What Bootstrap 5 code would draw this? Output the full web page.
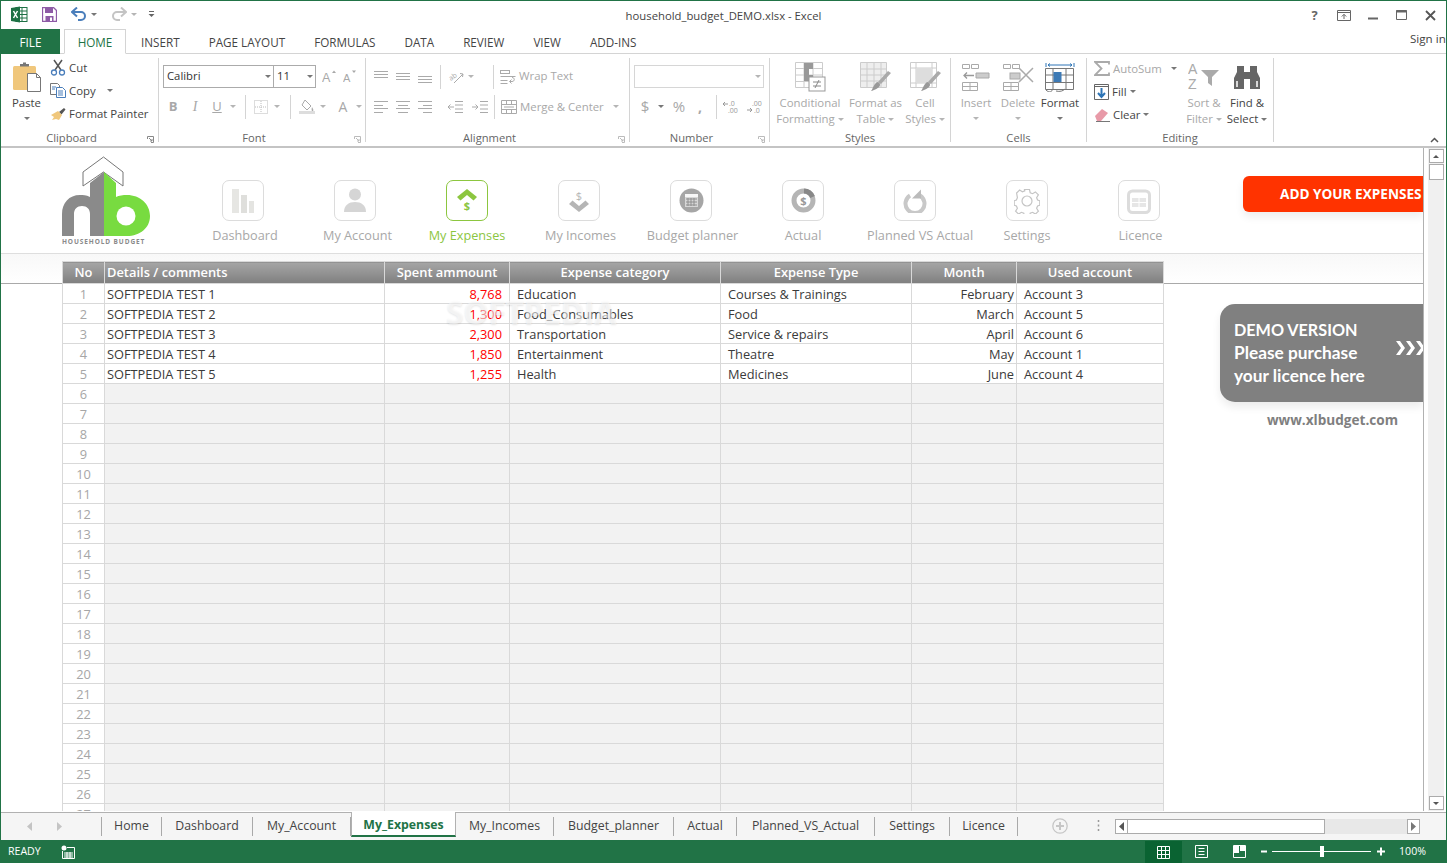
<!DOCTYPE html>
<html lang="en">
<head>
<meta charset="utf-8">
<title>household_budget_DEMO.xlsx - Excel</title>
<link href="https://cdn.jsdelivr.net/npm/bootstrap@5.3.0/dist/css/bootstrap.min.css" rel="stylesheet">
<style>
html,body{height:100%;overflow:hidden}
body{font-family:"Open Sans","Noto Sans",sans-serif;font-size:11.5px;color:#444;background:#fff;width:1447px;height:863px}
svg{display:block}
.xl-win{width:1447px;height:863px;border:solid #217346;border-width:1px 1px 0 1px}
.xl-title{height:28px}
.qat-ic{margin-top:-2px;margin-left:10px}
.xl-name{position:absolute;left:0;right:0;text-align:center;top:7px;font-size:11.3px;color:#444;line-height:16px}
.xl-titlewrap{position:relative}
.win-btn{width:29px;display:flex;justify-content:center}
.tri{display:inline-block;width:0;height:0;border-style:solid;border-width:3px 3px 0 3px;border-color:#777 transparent transparent}
.tri-off{border-top-color:#b5b5b5}
.tri-up{transform:rotate(180deg);border-top-color:#555}
.tri-dn{border-top-color:#555}
.gap-save{margin-left:14px}.gap-undo{margin-left:14px}.gap-redo{margin-left:14px}.gap-custom{margin-left:11px}
.qm{font-weight:700;font-size:13px;color:#666;line-height:14px}
.win-end{margin-right:1px}
.xl-tabs{height:25px;border-bottom:1px solid #d4d4d4;flex-wrap:nowrap}
.xl-tabs .nav-link{color:#444;padding:0;height:25px;line-height:26px;font-size:11.7px;text-align:center}
.xl-tabs .nav-item{margin-left:29px}
.xl-tabs .nav-item.ti-file{margin-left:0}
.xl-tabs .nav-item.ti-home{margin-left:4px}
.xl-tabs .nav-item.ti-ins{margin-left:15px}
.t-file{width:59px;background:#217346;color:#fff!important}
.t-home{width:62px;border:1px solid #d4d4d4;border-bottom:1px solid #fff;color:#217346!important;height:25px;background:#fff;line-height:24px!important}
.signin{margin-left:auto;font-size:11.6px;line-height:22px;margin-top:-1px;white-space:nowrap;width:36px;overflow:hidden}
.xl-ribbon{height:94px;border-bottom:2px solid #c4c4c4;padding-top:4px;position:relative}
.rg{height:84px;border-right:1px solid #d4d4d4;flex:none;display:flex;flex-direction:column}
.rg-body{height:73px;display:flex}
.rg-label{height:11px;line-height:14px;font-size:11.2px;color:#666;text-align:center;position:relative;white-space:nowrap}
.lab-l{padding-right:16px}
.launch{position:absolute;right:4px;top:5px}
.rw-clip{width:158px}.rw-font{width:207px}.rw-align{width:264px}.rw-num{width:140px}.rw-style{width:181px}.rw-cells{width:136px}.rw-edit{width:187px}
.stack3{display:flex;flex-direction:column;margin-top:-2px}
.stack-edit{padding-left:7px;width:97px;margin-top:-1px}
.srow{height:23px;display:flex;align-items:center;white-space:nowrap;font-size:11.4px;color:#444}
.srow svg{margin-right:3px}
.off{color:#a8a8a8!important}
.bigbtn{display:flex;flex-direction:column;align-items:center;text-align:center;flex:none;line-height:16px;font-size:11.4px;color:#444;padding-top:4px;white-space:nowrap}
.bigbtn>svg{height:30px;margin-bottom:3px}
.bigbtn .tri{vertical-align:2px}
.tri-low{margin-top:6px}
.dblock{display:block;height:16px}
.bigbtn.b-paste{width:49px;padding-left:2px}
.b-cond{width:80px;margin-left:0}.b-tab{width:53px;margin-left:-1px}.b-cell{width:44px;margin-left:1px}.b-c{width:42px}.b-sort{width:42px;margin-left:-1px}.b-find{width:44px}
.two-rows{display:flex;flex-direction:column;padding-top:7px;gap:7px;width:100%}
.r23{height:23px;display:flex;align-items:center;white-space:nowrap}
.pl4{padding-left:4px}.pl3{padding-left:3px}
.cell22{width:22px;height:22px;display:flex;align-items:center;justify-content:center;flex:none}
.cell10{width:10px;display:flex;justify-content:center;flex:none}
.cell16{width:16px}
.vsep{width:1px;height:24px;background:#d4d4d4;flex:none}
.fx13{font-size:13px}.fx14{font-size:14px}.fx15{font-size:15px}
.comma{margin-left:2px;font-weight:700;font-size:14px;line-height:10px}
.sz-ml5{margin-left:5px}.sz-ml6{margin-left:6px}
.combo{height:23px;border:1px solid #ababab;background:#fff;display:flex;align-items:center;font-size:11.3px;color:#333;padding:0 2px 0 3px;justify-content:space-between;flex:none}
.c-font{width:111px}.c-size{width:43px;margin-left:-1px}.c-num{width:130px;border-color:#d6d6d6}
.glyph{font-family:"Liberation Serif",serif}
.sp-a{margin:0 4px 0 7px}.sp-b{margin:0 5px 0 8px}.sp-c{margin:0 5px 0 4px}.sp-d{margin:0 0 0 17px}.sp-e{margin:0 0 0 3px}.sp-f{margin-left:8px}
.wr-ic{margin:0 3px 0 6px}
.txt-r{font-size:11.4px}
.txt-up{margin-top:-2px}
.ind-a{margin-left:8px}.ind-b{margin-left:3px}
.nudge-l{margin-left:-2px}
.tri-m{margin-left:9px}.tri-s{margin-left:3px}.tri-c{margin-left:11px}
.pct{margin-left:2px}
.cells-body{padding-left:4px}
.collapse-up{position:absolute;right:7px;bottom:3px}
.xl-sheet{height:664px;overflow:hidden}
.canvas{width:1423px;flex:none;overflow:hidden;position:relative;height:663px;border-right:1px solid #b1b1b1}
.dash-head{height:106px;border-bottom:1px solid #dedede;flex:none}
.logo-b{margin:7px 0 0 61px;flex:none}
.navstrip{margin-left:35px;padding-top:32px}
.nav-it{width:112px;text-align:center;color:#a8a8a8;font-size:12.7px;padding:0;text-decoration:none}
.nav-it:hover{color:#a8a8a8}
.nav-box{width:42px;height:41px;border:1px solid #dcdcdc;border-radius:7px;margin:0 auto 5px;display:flex;align-items:center;justify-content:center;background:#fff}
.nav-lab{line-height:18px;display:block;white-space:nowrap}
.lab-r1{padding-left:5px}.lab-r2{padding-left:8px}.lab-r3{padding-left:3px}.lab-r4{padding-left:4px}
.nav-on,.nav-on:hover{color:#8cc63f}
.nav-on .nav-box{border-color:#8cc63f}
.btn-add{margin-top:28px;margin-left:auto;width:180px;height:36px;background:#ff3300;border:0;color:#fff;font-weight:700;font-size:13.6px;border-radius:6px 0 0 6px;padding:0 0 0 37px;text-align:left;white-space:nowrap;overflow:hidden;box-shadow:0 5px 9px rgba(0,0,0,.07);line-height:36px;flex:none}
.btn-add:hover{background:#ff3300;color:#fff}
.sheet-body{padding-top:7px;background:linear-gradient(#f8f8f8,#fff 30px);background-repeat:no-repeat;background-size:100% 30px}
.gutter{width:61px;flex:none;margin-top:22px;border-top:1px solid #a9a9a9}
.x-table{table-layout:fixed;width:1101px;flex:none;border-collapse:collapse;margin:0;--bs-table-bg:transparent;--bs-table-border-color:#d9d9d9;color:#3a3a3a;font-size:12.8px}
.x-table>:not(caption)>*>*{padding:2px 7px 0;height:20px;line-height:17px;border:1px solid #d9d9d9;white-space:nowrap;overflow:hidden;box-shadow:none;vertical-align:middle}
.x-table thead th{height:22px;background:linear-gradient(#a6a6a6,#7f7f7f);color:#fff;text-align:center;font-weight:600;font-size:12.9px;line-height:21px;border-color:#d9d9d9;padding:0 2px}
.x-table thead th.th-left{text-align:left}
.x-table td.n{text-align:center;color:#a6a6a6;padding:2px 0 0}
.x-table td.d{padding-left:2px}
.x-table td.amt{text-align:right;color:#f00}
.x-table td.r{text-align:right;padding-right:2px}
.x-table tr.em td{background:#f2f2f2}
.x-table tr.em td.n{background:#fff}
.c1{width:42px}.c2{width:280px}.c3{width:125px}.c4{width:211px}.c5{width:191px}.c6{width:105px}.c7{width:147px}
.side{flex:1 1 auto;margin-top:22px;border-top:1px solid #a9a9a9;padding:20px 0 0 56px;min-width:0;overflow:hidden}
.demo{height:98px;background:#808080;border-radius:15px 0 0 15px;color:#fff;font-weight:700;font-size:17.3px;line-height:23px;padding:14px 0 0 14px;box-shadow:0 5px 9px rgba(0,0,0,.08);font-family:"Lato","Open Sans",sans-serif;position:relative;white-space:nowrap;overflow:hidden}
.demo-h{font-size:16.2px}
.chev{position:absolute;left:175px;top:36px}
.web{text-align:center;font-weight:700;color:#7f7f7f;font-size:13.6px;margin:9px 0 0 22px;line-height:18px;font-family:"Open Sans",sans-serif;white-space:nowrap}
.wmark{position:absolute;left:445px;top:148px;font-size:32px;font-weight:700;color:rgba(255,255,255,.55);text-shadow:0 1px 2px rgba(0,0,0,.1);pointer-events:none;line-height:32px;letter-spacing:-.4px}
.vscroll{flex:1;background:#f0f0f0;margin:0 2px 0 4px;display:flex;flex-direction:column;align-items:center;height:663px;padding-top:1px}
.sb-btn{width:15px;height:14px;border:1px solid #ababab;background:#fff;display:flex;align-items:center;justify-content:center;flex:none}
.sb-thumb{width:15px;height:16px;border:1px solid #ababab;background:#fff;margin-top:1px;flex:none}
.sb-last{margin-bottom:1px}
.xl-bot{height:28px;border-top:1px solid #b1b1b1;background:#f5f5f5;position:relative}
.sheet-nav{width:100px;padding-left:26px;gap:24px;flex:none}
.stabs{flex:none;flex-wrap:nowrap;height:27px}
.stabs .nav-link{padding:0;height:19px;margin-top:4px;line-height:17px;border-right:1px solid #a9a9a9;color:#444;font-size:12.3px;text-align:center;white-space:nowrap}
.stabs .st-first .nav-link{border-left:1px solid #a9a9a9}
.stabs .st-on .nav-link{height:25px;margin-top:-1px;background:#fff;color:#217346;font-weight:700;border:1px solid #b1b1b1;border-top:0;border-bottom:2px solid #217346;line-height:25px}
.st-a{width:61px}.st-b{width:91px}.st-c{width:98px}.st-d{width:105px}.st-e{width:98px}.st-f{width:120px}.st-g{width:63px}.st-h{width:138px}.st-i{width:75px}.st-j{width:68px}
.plus-w{margin-left:34px;margin-top:5px}
.dots{margin-left:29px;margin-top:6px}
.hscroll{margin-left:15px;margin-top:6px;width:305px;height:15px;background:#e8e8e8;display:flex;flex:none}
.hb{width:13px;height:15px;border:1px solid #ababab;background:#fff;display:flex;align-items:center;justify-content:center;flex:none}
.hthumb{width:197px;height:15px;border:1px solid #ababab;border-left:0;background:#fff;flex:none}
.xl-status{height:23px;background:#217346;color:#fff;font-size:10.6px;margin:0 -1px;padding-left:8px}
.st-macro{margin-left:20px}
.st-norm{width:37px;height:22px;background:#0a6332;margin-top:1px;display:flex;align-items:center;justify-content:center}
.st-view{width:38px;display:flex;justify-content:center}
.st-zoom{margin-left:3px}
.st-pct{margin:0 21px 0 12px}
</style>
</head>
<body>
<div class="xl-win d-flex flex-column">

  <div class="xl-title d-flex align-items-center xl-titlewrap">
    <div class="xl-name">household_budget_DEMO.xlsx - Excel</div>
    <div class="d-flex align-items-center qat-ic">
      <svg width="17" height="17" viewBox="0 0 17 17"><rect x="5" y="1.500" width="11" height="14" fill="#fff" stroke="#1e7145"/><path d="M11 2v13M6 5h10M6 8.500h10M6 12h10" stroke="#1e7145"/><path d="M0 2l9-1.500v16L0 15z" fill="#1e7145"/><path d="M2.500 5l4 7M6.500 5l-4 7" stroke="#fff" stroke-width="1.500"/></svg>
      <svg class="gap-save" width="15" height="15" viewBox="0 0 15 15"><path d="M.5.500h11l3 3v11H.5z" fill="#fff" stroke="#8e5ba6" stroke-width="1.300"/><rect x="3" y="1" width="8" height="5" fill="#8e5ba6"/><rect x="3.500" y="9" width="8" height="5.500" fill="#8e5ba6"/><rect x="8" y="10.500" width="2" height="3.500" fill="#fff"/></svg>
      <svg class="gap-undo" width="16" height="14" viewBox="0 0 16 14"><path d="M2 5h8a4 4 0 0 1 0 8H7" fill="none" stroke="#4a7ebb" stroke-width="2"/><path d="M6 .5L1 5l5 4.500" fill="none" stroke="#4a7ebb" stroke-width="2"/></svg>
      <span class="tri ms-1"></span>
      <svg class="gap-redo" width="16" height="14" viewBox="0 0 16 14"><path d="M14 5H6a4 4 0 0 0 0 8h3" fill="none" stroke="#c4c4c4" stroke-width="2"/><path d="M10 .5L15 5l-5 4.500" fill="none" stroke="#c4c4c4" stroke-width="2"/></svg>
      <span class="tri tri-off ms-1"></span>
      <svg class="gap-custom" width="7" height="8" viewBox="0 0 7 8"><path d="M1 1.500h5" stroke="#666"/><path d="M.5 4h6L3.500 7z" fill="#666"/></svg>
    </div>
    <div class="d-flex align-items-center ms-auto win-end">
      <div class="win-btn"><span class="qm">?</span></div>
      <div class="win-btn"><svg width="14" height="11" viewBox="0 0 14 11"><path d="M.5.500h13v10H.5zM.5 2.500h13" fill="none" stroke="#666"/><path d="M7 9V4.500M4.800 6.500L7 4.300l2.200 2.200" fill="none" stroke="#666"/></svg></div>
      <div class="win-btn"><svg width="10" height="10" viewBox="0 0 10 10"><path d="M0 8.500h10" stroke="#666" stroke-width="2"/></svg></div>
      <div class="win-btn"><svg width="11" height="10" viewBox="0 0 11 10"><path d="M.5.500h10v9H.5z" fill="none" stroke="#666"/><path d="M0 1.500h11" stroke="#666" stroke-width="2"/></svg></div>
      <div class="win-btn"><svg width="11" height="11" viewBox="0 0 11 11"><path d="M1 1l9 9M10 1l-9 9" stroke="#555" stroke-width="1.800"/></svg></div>
    </div>
  </div>

  <ul class="nav xl-tabs">
    <li class="nav-item ti-file"><a class="nav-link t-file" href="#">FILE</a></li>
    <li class="nav-item ti-home"><a class="nav-link t-home" href="#">HOME</a></li>
    <li class="nav-item ti-ins"><a class="nav-link" href="#">INSERT</a></li>
    <li class="nav-item"><a class="nav-link" href="#">PAGE LAYOUT</a></li>
    <li class="nav-item"><a class="nav-link" href="#">FORMULAS</a></li>
    <li class="nav-item"><a class="nav-link" href="#">DATA</a></li>
    <li class="nav-item"><a class="nav-link" href="#">REVIEW</a></li>
    <li class="nav-item"><a class="nav-link" href="#">VIEW</a></li>
    <li class="nav-item"><a class="nav-link" href="#">ADD-INS</a></li>
    <li class="signin">Sign in</li>
  </ul>

  <div class="xl-ribbon d-flex">
    <!-- Clipboard -->
    <section class="rg rw-clip">
      <div class="rg-body">
        <div class="bigbtn b-paste">
          <svg width="30" height="30" viewBox="0 0 30 30"><rect x="1" y="4" width="23" height="24" rx="1.500" fill="#f0c77c"/><path d="M8 4.500h9V2h-3V.5h-3V2H8z" fill="#777"/><path d="M15.500 11.500h9l4 4v14h-13z" fill="#fff" stroke="#777"/><path d="M24.500 11.500v4h4" fill="none" stroke="#777"/></svg>
          <span class="dblock">Paste</span>
          <span class="tri tri-low"></span>
        </div>
        <div class="stack3">
          <div class="srow"><svg width="16" height="17" viewBox="0 0 16 17"><path d="M4 1l7 10M12 1L5 11" stroke="#555" stroke-width="1.500"/><circle cx="4" cy="13.500" r="2.500" fill="none" stroke="#4a7ebb" stroke-width="1.300"/><circle cx="12" cy="13.500" r="2.500" fill="none" stroke="#4a7ebb" stroke-width="1.300"/></svg>Cut</div>
          <div class="srow"><svg width="16" height="15" viewBox="0 0 16 15"><path d="M.5.500h7l2 2v9h-9z" fill="#fff" stroke="#777"/><path d="M6.500 4.500h6l3 3v7h-9z" fill="#fff" stroke="#4a7ebb"/><path d="M8 8h5M8 10h5M8 12h5M2 4h4M2 6h3" stroke="#4a7ebb"/></svg>Copy<span class="tri tri-c"></span></div>
          <div class="srow"><svg width="16" height="14" viewBox="0 0 16 14"><path d="M9 5l5-4 1.500 1.500-4 5z" fill="#555"/><path d="M1 8l7-4 4 4-3 5-3-1-4 1 2-3z" fill="#f0c77c"/></svg>Format Painter</div>
        </div>
      </div>
      <div class="rg-label lab-l">Clipboard<svg class="launch" width="7" height="7" viewBox="0 0 7 7"><path d="M.5 3V.5h6v6H4M2 2l3 3M5 3v2H3" fill="none" stroke="#888"/></svg></div>
    </section>
    <!-- Font -->
    <section class="rg rw-font">
      <div class="rg-body">
        <div class="two-rows">
          <div class="r23 pl4">
            <div class="combo c-font"><span>Calibri</span><span class="tri"></span></div>
            <div class="combo c-size"><span>11</span><span class="tri"></span></div>
            <svg class="sz-ml6" width="16" height="17" viewBox="0 0 16 17"><text x="0" y="14" font-size="12.500" font-family="Liberation Sans" fill="#a8a8a8">A</text><path d="M10 5l2-2.500L14 5z" fill="#a8a8a8"/></svg>
            <svg class="sz-ml5" width="14" height="17" viewBox="0 0 14 17"><text x="0" y="14" font-size="11" font-family="Liberation Sans" fill="#a8a8a8">A</text><path d="M9 2.500h4L11 5z" fill="#a8a8a8"/></svg>
          </div>
          <div class="r23 off pl3">
            <div class="cell22 fw-bold fx13">B</div>
            <div class="cell22 fst-italic glyph fx14">I</div>
            <div class="cell22 text-decoration-underline fx13">U</div>
            <div class="cell10"><span class="tri tri-off"></span></div>
            <div class="vsep sp-a"></div>
            <div class="cell22"><svg width="14" height="14" viewBox="0 0 14 14"><path d="M.5.500h13v13H.5zM7 1v12M1 7h12" fill="none" stroke="#bbb" stroke-dasharray="1 1"/></svg></div>
            <div class="cell10"><span class="tri tri-off"></span></div>
            <div class="vsep sp-b"></div>
            <div class="cell22"><svg width="16" height="15" viewBox="0 0 16 15"><path d="M6 1l6 6-4 4-5-5z" fill="#fff" stroke="#aaa"/><path d="M13 8c1 2 2 3 1 4s-2-1-1-4z" fill="#aaa"/><rect y="12" width="16" height="3" fill="#ddd"/></svg></div>
            <div class="cell10"><span class="tri tri-off"></span></div>
            <div class="cell22 ms-1 fx14">A</div>
            <div class="cell10"><span class="tri tri-off"></span></div>
          </div>
        </div>
      </div>
      <div class="rg-label lab-l">Font<svg class="launch" width="7" height="7" viewBox="0 0 7 7"><path d="M.5 3V.5h6v6H4M2 2l3 3M5 3v2H3" fill="none" stroke="#bbb"/></svg></div>
    </section>
    <!-- Alignment -->
    <section class="rg rw-align">
      <div class="rg-body">
        <div class="two-rows">
          <div class="r23 off pl4">
            <div class="cell22"><svg width="14" height="14" viewBox="0 0 14 14"><path d="M0 1.500h14M0 4.500h14M0 7.500h14" stroke="#aaa"/></svg></div>
            <div class="cell22"><svg width="14" height="14" viewBox="0 0 14 14"><path d="M0 3.500h14M0 6.500h14M0 9.500h14" stroke="#aaa"/></svg></div>
            <div class="cell22"><svg width="14" height="14" viewBox="0 0 14 14"><path d="M0 6.500h14M0 9.500h14M0 12.500h14" stroke="#aaa"/></svg></div>
            <div class="vsep sp-c"></div>
            <div class="cell22"><svg width="18" height="18" viewBox="0 0 18 18"><text x="1" y="11" font-size="7" fill="#aaa" transform="rotate(-35 5 9)">ab</text><path d="M6 15L15 6M12 5.500l3 .5-.5 3" fill="none" stroke="#aaa"/></svg></div>
            <div class="cell10 nudge-l"><span class="tri tri-off"></span></div>
            <div class="vsep sp-d"></div>
            <svg class="wr-ic" width="16" height="14" viewBox="0 0 16 14"><path d="M.5 6.500h15M.5 10.500h7M.5 13.500h7" stroke="#aaa" fill="none"/><rect x=".5" y=".5" width="9" height="3" fill="none" stroke="#aaa"/><path d="M12 7.500c3 0 3 4 0 4h-2M11.500 9.500l-2 2 2 2" fill="none" stroke="#aaa"/></svg>
            <span class="txt-r txt-up">Wrap Text</span>
          </div>
          <div class="r23 off pl4">
            <div class="cell22"><svg width="14" height="12" viewBox="0 0 14 12"><path d="M0 .5h14M0 4.500h9M0 7.500h14M0 11.500h9" stroke="#aaa"/></svg></div>
            <div class="cell22"><svg width="14" height="12" viewBox="0 0 14 12"><path d="M0 .5h14M2 4.500h10M0 7.500h14M2 11.500h10" stroke="#aaa"/></svg></div>
            <div class="cell22"><svg width="14" height="12" viewBox="0 0 14 12"><path d="M0 .5h14M5 4.500h9M0 7.500h14M5 11.500h9" stroke="#aaa"/></svg></div>
            <div class="cell22 ind-a"><svg width="16" height="12" viewBox="0 0 16 12"><path d="M8 .5h8M8 4h8M8 8h8M8 11.500h8M7 6H1M3.500 3.500L1 6l2.500 2.500" fill="none" stroke="#aaa"/></svg></div>
            <div class="cell22 ind-b"><svg width="16" height="12" viewBox="0 0 16 12"><path d="M8 .5h8M8 4h8M8 8h8M8 11.500h8M0 6h6M3.500 3.500L6 6 3.500 8.500" fill="none" stroke="#aaa"/></svg></div>
            <div class="vsep sp-e"></div>
            <svg class="wr-ic" width="16" height="14" viewBox="0 0 16 14"><path d="M.5.500h15v13H.5zM.5 4.500h15M.5 9.500h15M5.500 1v3M10.500 1v3M5.500 10v3M10.500 10v3M3 7h10" fill="none" stroke="#aaa"/></svg>
            <span class="txt-r">Merge &amp; Center</span>
            <span class="tri tri-off tri-m"></span>
          </div>
        </div>
      </div>
      <div class="rg-label lab-l">Alignment<svg class="launch" width="7" height="7" viewBox="0 0 7 7"><path d="M.5 3V.5h6v6H4M2 2l3 3M5 3v2H3" fill="none" stroke="#bbb"/></svg></div>
    </section>
    <!-- Number -->
    <section class="rg rw-num">
      <div class="rg-body">
        <div class="two-rows">
          <div class="r23 pl4"><div class="combo c-num"><span></span><span class="tri tri-off"></span></div></div>
          <div class="r23 off pl4">
            <div class="cell22 fx15">$</div>
            <div class="cell10"><span class="tri"></span></div>
            <div class="cell22 pct fx15">%</div>
            <div class="cell22 cell16 comma">,</div>
            <div class="vsep sp-f"></div>
            <svg class="sz-ml5" width="19" height="17" viewBox="0 0 19 17"><text x="7" y="8" font-size="7" fill="#999">.0</text><text x="6" y="15" font-size="7" fill="#999">.00</text><path d="M6 6H1M3 4L1 6l2 2" fill="none" stroke="#999"/></svg>
            <svg class="sz-ml5" width="19" height="17" viewBox="0 0 19 17"><text x="6" y="8" font-size="7" fill="#999">.00</text><text x="8" y="15" font-size="7" fill="#999">.0</text><path d="M1 12h5M4 10l2 2-2 2" fill="none" stroke="#999"/></svg>
          </div>
        </div>
      </div>
      <div class="rg-label lab-l">Number<svg class="launch" width="7" height="7" viewBox="0 0 7 7"><path d="M.5 3V.5h6v6H4M2 2l3 3M5 3v2H3" fill="none" stroke="#bbb"/></svg></div>
    </section>
    <!-- Styles -->
    <section class="rg rw-style">
      <div class="rg-body">
        <div class="bigbtn off b-cond">
          <svg width="31" height="30" viewBox="0 0 31 30"><path d="M.5.500h27v25H.5z" fill="#fff" stroke="#ccc"/><path d="M9 1v24M18 1v24M1 6.500h26M1 13h26M1 19.500h26" stroke="#ccc"/><path d="M9 1h9v6H9zM9 7h5v6H9zM9 13h9v6H9z" fill="#999"/><rect x="14" y="15" width="16" height="14" fill="#fff" stroke="#999"/><path d="M18 20h8M18 24h8M24 18l-4 8" stroke="#888"/></svg>
          <span class="dblock">Conditional</span><span class="dblock">Formatting <span class="tri tri-off"></span></span>
        </div>
        <div class="bigbtn off b-tab">
          <svg width="31" height="30" viewBox="0 0 31 30"><path d="M.5.500h26v25H.5z" fill="#eee" stroke="#ccc"/><path d="M7 1v24M14 1v24M21 1v24M1 7h26M1 13h26M1 19h26" stroke="#ccc"/><path d="M28 9l3 2-10 11-3-2z" fill="#aaa"/><path d="M17 20c3 0 4 3 2 5s-7 4-8 4c2-2 2-6 6-9z" fill="#999"/></svg>
          <span class="dblock">Format as</span><span class="dblock">Table <span class="tri tri-off"></span></span>
        </div>
        <div class="bigbtn off b-cell">
          <svg width="31" height="30" viewBox="0 0 31 30"><path d="M.5.500h26v25H.5z" fill="#fff" stroke="#ccc"/><path d="M1 6h26M6 1v24M22 1v24M1 21h26" stroke="#ccc"/><rect x="6" y="6" width="16" height="15" fill="#ddd"/><path d="M28 9l3 2-10 11-3-2z" fill="#aaa"/><path d="M17 20c3 0 4 3 2 5s-7 4-8 4c2-2 2-6 6-9z" fill="#999"/></svg>
          <span class="dblock">Cell</span><span class="dblock">Styles <span class="tri tri-off"></span></span>
        </div>
      </div>
      <div class="rg-label">Styles</div>
    </section>
    <!-- Cells -->
    <section class="rg rw-cells">
      <div class="rg-body cells-body">
        <div class="bigbtn off b-c">
          <svg width="28" height="30" viewBox="0 0 28 30"><path d="M.5 2.500h7v4h-7zM9.500 2.500h7v4h-7zM.5 20.500h15v8H.5zM8 20.500v8M.5 24.500h15" fill="none" stroke="#aaa"/><path d="M14 11h13v5H14z" fill="#ccc" stroke="#aaa"/><path d="M12 13.500H2M5 10.500l-3 3 3 3" fill="none" stroke="#999" stroke-width="1.300"/></svg>
          <span class="dblock">Insert</span><span class="tri tri-off tri-low"></span>
        </div>
        <div class="bigbtn off b-c">
          <svg width="31" height="30" viewBox="0 0 31 30"><path d="M.5 2.500h7v4h-7zM9.500 2.500h7v4h-7zM.5 20.500h15v8H.5zM8 20.500v8M.5 24.500h15" fill="none" stroke="#aaa"/><rect x="7" y="11" width="10" height="6" fill="#ccc" stroke="#aaa"/><path d="M16 6l14 14M30 6L16 20" stroke="#aaa" stroke-width="1.500"/></svg>
          <span class="dblock">Delete</span><span class="tri tri-off tri-low"></span>
        </div>
        <div class="bigbtn b-c">
          <svg width="30" height="30" viewBox="0 0 30 30"><path d="M1 1v4M29 1v4M3 3h24M3 3l2-1.500M3 3l2 1.500M27 3l-2-1.500M27 3l-2 1.500" stroke="#2e75b6" fill="none"/><path d="M.5 6.500h28v21H.5zM8 7v20M21 7v20M1 13h28M1 20.500h28" fill="#fff" stroke="#777"/><rect x="8.500" y="10" width="8" height="10" fill="#3d7ab5"/><path d="M1 28c3 3 6 2 6 0M11 29c4 1 7 0 9-2" fill="none" stroke="#777"/></svg>
          <span class="dblock">Format</span><span class="tri tri-low"></span>
        </div>
      </div>
      <div class="rg-label">Cells</div>
    </section>
    <!-- Editing -->
    <section class="rg rw-edit">
      <div class="rg-body">
        <div class="stack3 stack-edit">
          <div class="srow off"><svg width="16" height="15" viewBox="0 0 16 15"><path d="M15 3.500V1H1l6.500 6.500L1 14h14v-2.500" fill="none" stroke="#aaa" stroke-width="1.800"/></svg>AutoSum<span class="tri tri-m"></span></div>
          <div class="srow"><svg width="15" height="16" viewBox="0 0 15 16"><path d="M.5.500h14v15H.5z" fill="#fff" stroke="#666"/><path d="M.5 2.500h14" stroke="#666"/><path d="M7.500 4v9M4 9l3.500 4L11 9" fill="none" stroke="#2e75b6" stroke-width="2"/></svg>Fill<span class="tri tri-s"></span></div>
          <div class="srow"><svg width="16" height="14" viewBox="0 0 16 14"><path d="M1 8l7-7 6 4-7 8H3z" fill="#e89aa8"/><path d="M2 13.500h14" stroke="#777"/></svg>Clear<span class="tri tri-s"></span></div>
        </div>
        <div class="bigbtn off b-sort">
          <svg width="32" height="30" viewBox="0 0 32 30"><text x="0" y="12" font-size="14" font-family="Liberation Sans" fill="#aaa">A</text><text x="0" y="27" font-size="14" font-family="Liberation Sans" fill="#aaa">Z</text><path d="M13 8h18l-7 7v9l-4-3v-6z" fill="#aaa"/></svg>
          <span class="dblock">Sort &amp;</span><span class="dblock">Filter <span class="tri tri-off"></span></span>
        </div>
        <div class="bigbtn b-find">
          <svg width="30" height="30" viewBox="0 0 30 30"><path d="M2 27V16l3-6V4h7v6h6V4h7v6l3 6v11H18V17h-6v10z" fill="#666"/><path d="M5 19v6M25 19v6" stroke="#fff" stroke-width="1.500"/></svg>
          <span class="dblock">Find &amp;</span><span class="dblock">Select <span class="tri"></span></span>
        </div>
      </div>
      <div class="rg-label">Editing</div>
    </section>
    <svg class="collapse-up" width="9" height="6" viewBox="0 0 9 6"><path d="M1 5l3.500-3.500L8 5" fill="none" stroke="#555" stroke-width="1.500"/></svg>
  </div>

  <div class="xl-sheet d-flex">
    <main class="canvas d-flex flex-column">
      <header class="dash-head d-flex">
        <div class="logo-b">
          <svg width="90" height="92" viewBox="62 155 90 92">
            <path d="M83 172l20.500-15L123 172v14l-19.500-14L83 186z" fill="#fff" stroke="#777"/>
            <path d="M104 172L90 183V197C86 195 83 195 80 195C69 195 62 203 62 214V236H74V214C74 209 77 206 82 206C87 206 90 209 90 214V236H104Z" fill="#8a8a8a"/>
            <path d="M104 172L116 183V197C119 195.500 123 195 127 195C140 195 150 204 150 216C150 228 140 236 127 236H104Z" fill="#78db40"/>
            <circle cx="126" cy="216" r="9.500" fill="#fff"/>
            <text x="62" y="243.500" font-size="6.500" font-weight="700" letter-spacing=".9" fill="#8a8a8a" font-family="Open Sans">HOUSEHOLD BUDGET</text>
          </svg>
        </div>
        <nav class="nav flex-nowrap navstrip">
          <a class="nav-it" href="#"><span class="nav-box"><svg width="24" height="25" viewBox="0 0 24 25"><rect x="1" y="1" width="7" height="24" fill="#e6e6e3"/><rect x="10" y="7" width="6" height="18" fill="#dfdfdc"/><rect x="18" y="13" width="5" height="12" fill="#e4e4e1"/></svg></span><span class="nav-lab lab-r4">Dashboard</span></a>
          <a class="nav-it" href="#"><span class="nav-box"><svg width="24" height="25" viewBox="0 0 24 25"><circle cx="12" cy="6.500" r="6" fill="#d5d5d5"/><path d="M1 24c0-7 5-10 11-10s11 3 11 10z" fill="#d5d5d5"/></svg></span><span class="nav-lab lab-r1">My Account</span></a>
          <a class="nav-it nav-on" href="#"><span class="nav-box"><svg width="22" height="26" viewBox="0 0 22 26"><path d="M1 9l10-8 10 8-3.500 3.500L11 7l-6.500 5.500z" fill="#8cc63f"/><text x="11" y="22" font-size="11" font-weight="700" fill="#8cc63f" text-anchor="middle" font-family="Open Sans">$</text></svg></span><span class="nav-lab">My Expenses</span></a>
          <a class="nav-it" href="#"><span class="nav-box"><svg width="22" height="26" viewBox="0 0 22 26"><text x="11" y="12" font-size="11" fill="#b5b5b5" text-anchor="middle" font-family="Open Sans">$</text><path d="M1 16l10 8 10-8-3.500-3.500L11 18l-6.500-5.500z" fill="#b5b5b5"/></svg></span><span class="nav-lab lab-r3">My Incomes</span></a>
          <a class="nav-it" href="#"><span class="nav-box"><svg width="25" height="25" viewBox="0 0 25 25"><circle cx="12.500" cy="12.500" r="12" fill="#a6a6a6"/><rect x="6" y="6" width="13" height="13" fill="#fff" fill-opacity=".55"/><rect x="6" y="6" width="13" height="3" fill="#fff" fill-opacity=".8"/><path d="M7 11h11M7 14h11M7 17h11M9 10v8M12 10v8M15 10v8" stroke="#8f8f8f"/></svg></span><span class="nav-lab lab-r3">Budget planner</span></a>
          <a class="nav-it" href="#"><span class="nav-box"><svg width="25" height="25" viewBox="0 0 25 25"><circle cx="12.500" cy="12.500" r="9.500" fill="none" stroke="#b5b5b5" stroke-width="5"/><path d="M13 3a9.500 9.500 0 0 1 8.500 6" fill="none" stroke="#888" stroke-width="5"/><text x="12.500" y="16.500" font-size="11" font-weight="700" fill="#999" text-anchor="middle" font-family="Open Sans">$</text></svg></span><span class="nav-lab">Actual</span></a>
          <a class="nav-it" href="#"><span class="nav-box"><svg width="24" height="24" viewBox="0 0 24 24"><path d="M7 6.500a9.500 9.500 0 1 0 10 0" fill="none" stroke="#c8c8c8" stroke-width="4"/><path d="M18 .5v9h-9z" fill="#bbb"/></svg></span><span class="nav-lab lab-r2">Planned VS Actual</span></a>
          <a class="nav-it" href="#"><span class="nav-box"><svg width="26" height="26" viewBox="0 0 26 26"><path d="M10.500 1.500h5l.7 3.200 2.400 1 2.800-1.800 3 3-1.800 2.800 1 2.400 2.200.7v4.400l-2.200.7-1 2.400 1.800 2.800-3 3-2.800-1.800-2.400 1-.7 3.200h-5l-.7-3.200-2.400-1-2.800 1.800-3-3 1.800-2.800-1-2.400-2.200-.7v-4.400l2.200-.7 1-2.400L2.600 5l3-3 2.800 1.800 2.400-1z" fill="none" stroke="#c4c4c4" stroke-width="1.200"/><circle cx="13" cy="13" r="5" fill="none" stroke="#c4c4c4" stroke-width="1.200"/></svg></span><span class="nav-lab">Settings</span></a>
          <a class="nav-it" href="#"><span class="nav-box"><svg width="24" height="26" viewBox="0 0 24 26"><rect x="1.500" y="3" width="21" height="21.500" rx="4" fill="none" stroke="#dcdcdc" stroke-width="3"/><path d="M5 10h14v9H5z" fill="#e6e6e6"/><path d="M5 14.500h14M12 10v9" stroke="#fff"/></svg></span><span class="nav-lab lab-r3">Licence</span></a>
        </nav>
        <button type="button" class="btn btn-add">ADD YOUR EXPENSES</button>
      </header>
      <div class="sheet-body d-flex flex-grow-1">
        <div class="gutter"></div>
        <table class="table x-table">
          <colgroup><col class="c1"><col class="c2"><col class="c3"><col class="c4"><col class="c5"><col class="c6"><col class="c7"></colgroup>
          <thead><tr><th>No</th><th class="th-left">Details / comments</th><th>Spent ammount</th><th>Expense category</th><th>Expense Type</th><th>Month</th><th>Used account</th></tr></thead>
          <tbody>
            <tr><td class="n">1</td><td class="d">SOFTPEDIA TEST 1</td><td class="amt">8,768</td><td>Education</td><td>Courses &amp; Trainings</td><td class="r">February</td><td>Account 3</td></tr>
            <tr><td class="n">2</td><td class="d">SOFTPEDIA TEST 2</td><td class="amt">1,300</td><td>Food_Consumables</td><td>Food</td><td class="r">March</td><td>Account 5</td></tr>
            <tr><td class="n">3</td><td class="d">SOFTPEDIA TEST 3</td><td class="amt">2,300</td><td>Transportation</td><td>Service &amp; repairs</td><td class="r">April</td><td>Account 6</td></tr>
            <tr><td class="n">4</td><td class="d">SOFTPEDIA TEST 4</td><td class="amt">1,850</td><td>Entertainment</td><td>Theatre</td><td class="r">May</td><td>Account 1</td></tr>
            <tr><td class="n">5</td><td class="d">SOFTPEDIA TEST 5</td><td class="amt">1,255</td><td>Health</td><td>Medicines</td><td class="r">June</td><td>Account 4</td></tr>
            <tr class="em"><td class="n">6</td><td></td><td></td><td></td><td></td><td></td><td></td></tr>
            <tr class="em"><td class="n">7</td><td></td><td></td><td></td><td></td><td></td><td></td></tr>
            <tr class="em"><td class="n">8</td><td></td><td></td><td></td><td></td><td></td><td></td></tr>
            <tr class="em"><td class="n">9</td><td></td><td></td><td></td><td></td><td></td><td></td></tr>
            <tr class="em"><td class="n">10</td><td></td><td></td><td></td><td></td><td></td><td></td></tr>
            <tr class="em"><td class="n">11</td><td></td><td></td><td></td><td></td><td></td><td></td></tr>
            <tr class="em"><td class="n">12</td><td></td><td></td><td></td><td></td><td></td><td></td></tr>
            <tr class="em"><td class="n">13</td><td></td><td></td><td></td><td></td><td></td><td></td></tr>
            <tr class="em"><td class="n">14</td><td></td><td></td><td></td><td></td><td></td><td></td></tr>
            <tr class="em"><td class="n">15</td><td></td><td></td><td></td><td></td><td></td><td></td></tr>
            <tr class="em"><td class="n">16</td><td></td><td></td><td></td><td></td><td></td><td></td></tr>
            <tr class="em"><td class="n">17</td><td></td><td></td><td></td><td></td><td></td><td></td></tr>
            <tr class="em"><td class="n">18</td><td></td><td></td><td></td><td></td><td></td><td></td></tr>
            <tr class="em"><td class="n">19</td><td></td><td></td><td></td><td></td><td></td><td></td></tr>
            <tr class="em"><td class="n">20</td><td></td><td></td><td></td><td></td><td></td><td></td></tr>
            <tr class="em"><td class="n">21</td><td></td><td></td><td></td><td></td><td></td><td></td></tr>
            <tr class="em"><td class="n">22</td><td></td><td></td><td></td><td></td><td></td><td></td></tr>
            <tr class="em"><td class="n">23</td><td></td><td></td><td></td><td></td><td></td><td></td></tr>
            <tr class="em"><td class="n">24</td><td></td><td></td><td></td><td></td><td></td><td></td></tr>
            <tr class="em"><td class="n">25</td><td></td><td></td><td></td><td></td><td></td><td></td></tr>
            <tr class="em"><td class="n">26</td><td></td><td></td><td></td><td></td><td></td><td></td></tr>
            <tr class="em"><td class="n">27</td><td></td><td></td><td></td><td></td><td></td><td></td></tr>
          </tbody>
        </table>
        <aside class="side">
          <div class="demo"><span class="demo-h">DEMO VERSION</span><br>Please purchase<br>your licence here
            <svg class="chev" width="30" height="16" viewBox="0 0 30 16"><path d="M1 1h4l5 7-5 7H1l5-7zM11 1h4l5 7-5 7h-4l5-7zM21 1h4l5 7-5 7h-4l5-7z" fill="#fff"/></svg>
          </div>
          <div class="web">www.xlbudget.com</div>
        </aside>
      </div>
      <div class="wmark">SOFTPEDIA</div>
    </main>
    <div class="vscroll">
      <div class="sb-btn"><span class="tri tri-up"></span></div>
      <div class="sb-thumb"></div>
      <div class="sb-btn mt-auto sb-last"><span class="tri tri-dn"></span></div>
    </div>
  </div>

  <div class="xl-bot d-flex">
    <div class="sheet-nav d-flex align-items-center">
      <svg width="6" height="9" viewBox="0 0 6 9"><path d="M5 0v9L0 4.500z" fill="#c4c4c4"/></svg>
      <svg width="6" height="9" viewBox="0 0 6 9"><path d="M0 0v9l5-4.500z" fill="#c4c4c4"/></svg>
    </div>
    <ul class="nav stabs">
      <li class="nav-item st-first"><a class="nav-link st-a" href="#">Home</a></li>
      <li class="nav-item"><a class="nav-link st-b" href="#">Dashboard</a></li>
      <li class="nav-item"><a class="nav-link st-c" href="#">My_Account</a></li>
      <li class="nav-item st-on"><a class="nav-link st-d" href="#">My_Expenses</a></li>
      <li class="nav-item"><a class="nav-link st-e" href="#">My_Incomes</a></li>
      <li class="nav-item"><a class="nav-link st-f" href="#">Budget_planner</a></li>
      <li class="nav-item"><a class="nav-link st-g" href="#">Actual</a></li>
      <li class="nav-item"><a class="nav-link st-h" href="#">Planned_VS_Actual</a></li>
      <li class="nav-item"><a class="nav-link st-i" href="#">Settings</a></li>
      <li class="nav-item"><a class="nav-link st-j" href="#">Licence</a></li>
    </ul>
    <svg class="plus-w" width="16" height="16" viewBox="0 0 16 16"><circle cx="8" cy="8" r="7.200" fill="none" stroke="#c6c6c6" stroke-width="1.300"/><path d="M8 4v8M4 8h8" stroke="#c6c6c6" stroke-width="2"/></svg>
    <svg class="dots" width="3" height="13" viewBox="0 0 3 13"><path d="M1.500 1v2M1.500 5.500v2M1.500 10v2" stroke="#999" stroke-width="1.500"/></svg>
    <div class="hscroll">
      <div class="hb"><svg width="5" height="9" viewBox="0 0 5 9"><path d="M5 0v9L0 4.500z" fill="#555"/></svg></div>
      <div class="hthumb"></div>
      <div class="hb ms-auto"><svg width="5" height="9" viewBox="0 0 5 9"><path d="M0 0v9l5-4.500z" fill="#777"/></svg></div>
    </div>
  </div>

  <footer class="xl-status d-flex align-items-center">
    <span>READY</span>
    <svg class="st-macro" width="14" height="14" viewBox="0 0 14 14"><circle cx="3" cy="3" r="2.500" fill="#fff"/><path d="M6 2.500h7.500v11H1.500V6" fill="none" stroke="#fff"/><path d="M3 8h9M3 10h9M3 12h9M6 7v6M9 7v6" stroke="#fff"/></svg>
    <div class="d-flex align-items-center ms-auto h-100">
      <div class="st-norm"><svg width="13" height="13" viewBox="0 0 13 13"><path d="M.5.500h12v12H.5zM4.500 1v11M8.500 1v11M1 4.500h11M1 8.500h11" fill="none" stroke="#fff"/></svg></div>
      <div class="st-view"><svg width="13" height="13" viewBox="0 0 13 13"><path d="M.5.500h12v12H.5zM3.500 3.500h6M3.500 6.500h6M3.500 9.500h6" fill="none" stroke="#fff"/></svg></div>
      <div class="st-view"><svg width="13" height="13" viewBox="0 0 13 13"><path d="M.5.500h12v12H.5z" fill="none" stroke="#fff"/><path d="M1 1h5v7H1zM7 1h5v5H7z" fill="#fff"/></svg></div>
      <svg class="st-zoom" width="126" height="11" viewBox="0 0 126 11"><path d="M0 5.500h6" stroke="#fff" stroke-width="2"/><path d="M11 5.500h99" stroke="#fff"/><rect x="59" y="0" width="4" height="11" fill="#fff"/><path d="M116 5.500h8M120 1.500v8" stroke="#fff" stroke-width="2"/></svg>
      <span class="st-pct">100%</span>
    </div>
  </footer>
</div>
<script src="https://cdn.jsdelivr.net/npm/bootstrap@5.3.0/dist/js/bootstrap.bundle.min.js"></script>
</body>
</html>
